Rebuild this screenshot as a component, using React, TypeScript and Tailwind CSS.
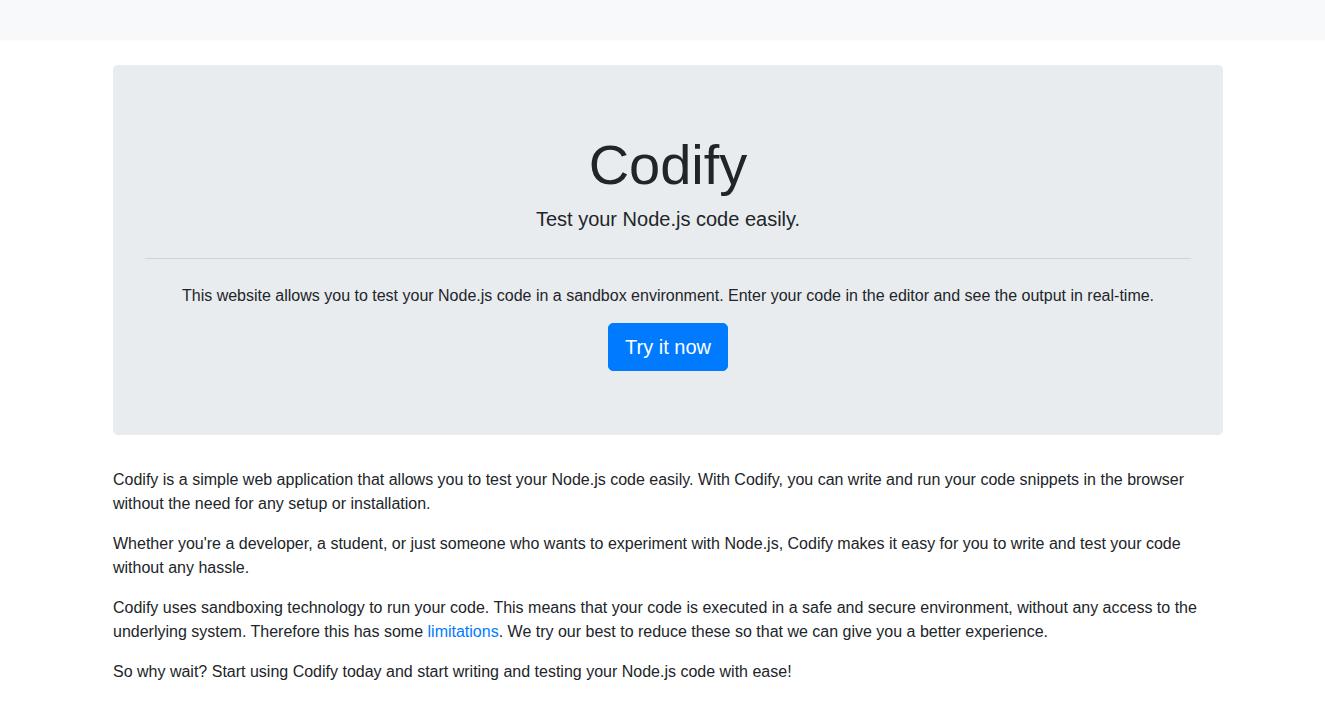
export default function App() {
  return (
    <div className="min-h-screen bg-white text-[#212529] text-base leading-6" style={{ fontFamily: '"Liberation Sans", Arial, sans-serif' }}>
      <nav className="h-10 bg-[#f8f9fa] shadow-[0_1px_2px_rgba(0,0,0,0.02)]" />

      <main className="w-[1110px] ml-[113px] mt-[25px]">
        <section className="bg-[#e9ecef] rounded-[5px] px-8 py-16 text-center mb-[33px]">
          <h1 className="text-[56px] font-light leading-[71px] mb-1">Codify</h1>
          <p className="text-xl leading-[30px]">Test your Node.js code easily.</p>
          <hr className="my-6 border-0 border-t border-black/10" />
          <p className="leading-[26px] mb-[14px]">
            This website allows you to test your Node.js code in a sandbox environment. Enter your code in the editor and see the output in real-time.
          </p>
          <button className="bg-[#007bff] text-white text-xl leading-[30px] px-4 py-2 rounded-[5px] border border-[#007bff]">
            Try it now
          </button>
        </section>

        <div className="flex flex-col gap-4">
          <p>
            Codify is a simple web application that allows you to test your Node.js code easily. With Codify, you can write and run your code snippets in the browser without the need for any setup or installation.
          </p>
          <p>
            Whether you're a developer, a student, or just someone who wants to experiment with Node.js, Codify makes it easy for you to write and test your code without any hassle.
          </p>
          <p>
            Codify uses sandboxing technology to run your code. This means that your code is executed in a safe and secure environment, without any access to the underlying system. Therefore this has some{' '}
            <a href="#" className="text-[#007bff]">limitations</a>. We try our best to reduce these so that we can give you a better experience.
          </p>
          <p>So why wait? Start using Codify today and start writing and testing your Node.js code with ease!</p>
        </div>
      </main>
    </div>
  );
}
